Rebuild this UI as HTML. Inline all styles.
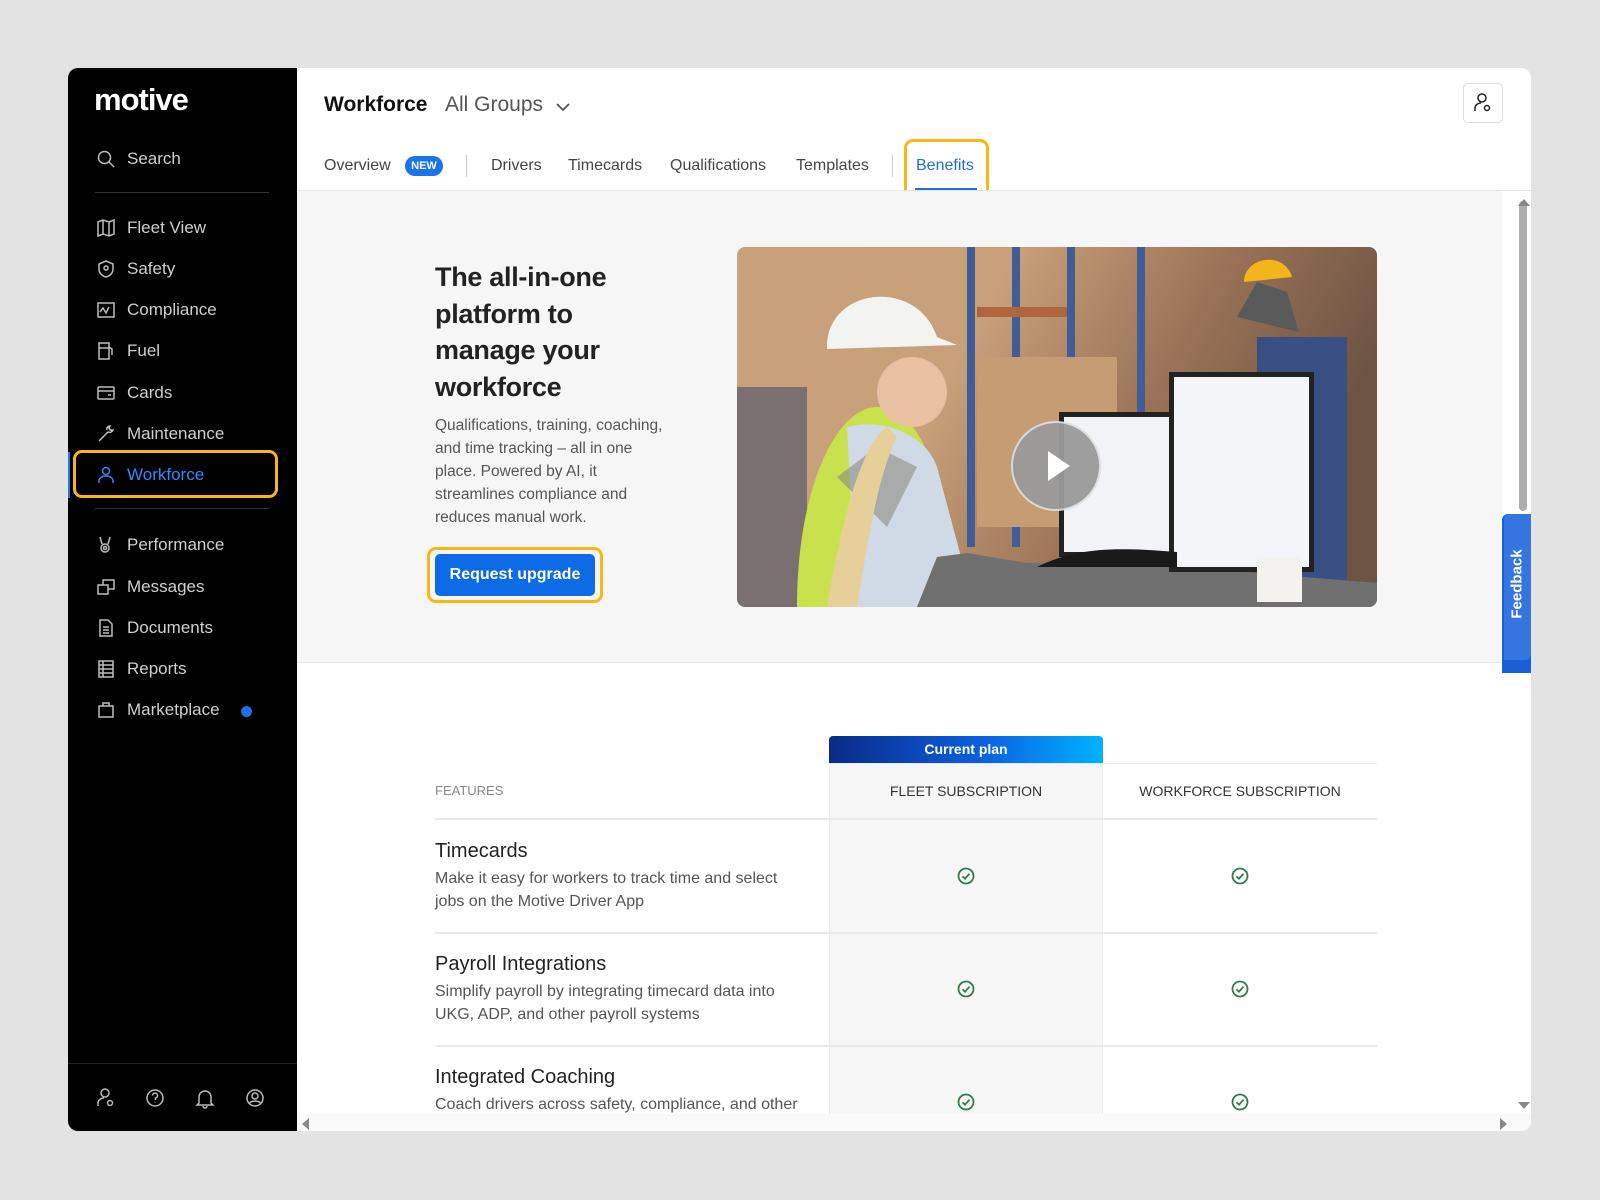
<!DOCTYPE html>
<html><head><meta charset="utf-8"><style>
*{box-sizing:border-box;margin:0;padding:0}
body{width:1600px;height:1200px;background:#e3e3e3;font-family:"Liberation Sans",sans-serif;position:relative;overflow:hidden}
.outer{position:absolute;left:0;top:0;width:1600px;height:1200px;border-radius:40px;background:#e3e3e3}
.app{position:absolute;left:68px;top:68px;width:1463px;height:1063px;background:#fff;border-radius:10px;overflow:hidden}
.side{position:absolute;left:0;top:0;width:229px;height:1063px;background:#000;color:#d0d0d0}
.si{position:absolute;left:28px;display:flex;align-items:center;font-size:17px;color:#cfcfcf}
.si svg{width:20px;height:20px;margin-right:11px;stroke:#bdbdbd;fill:none;stroke-width:1.5}
.sep{position:absolute;left:27px;width:174px;height:1px;background:#333}
.abs{position:absolute}
.tab{position:absolute;top:89px;font-size:16px;color:#444}
.chk{position:absolute;width:18px;height:18px}
</style></head><body>
<div class="outer"></div>
<div class="app">
 <div class="side">
  <div class="abs" style="left:26px;top:14px;color:#fff;font-size:31px;font-weight:bold;letter-spacing:-1px">motive</div>
  <div class="si" style="top:81px"><svg viewBox="0 0 20 20"><circle cx="8.5" cy="8.5" r="6"/><path d="M13 13l5 5"/></svg>Search</div>
  <div class="sep" style="top:124px"></div>
  <div class="si" style="top:150px"><svg viewBox="0 0 20 20"><path d="M2 4l5-2 6 2 5-2v14l-5 2-6-2-5 2z M7 2v14 M13 4v14"/></svg>Fleet View</div>
  <div class="si" style="top:191px"><svg viewBox="0 0 20 20"><path d="M10 2l7 3v5c0 4-3 7-7 8-4-1-7-4-7-8V5z"/><circle cx="10" cy="9" r="2"/></svg>Safety</div>
  <div class="si" style="top:232px"><svg viewBox="0 0 20 20"><rect x="2" y="3" width="16" height="14"/><path d="M4 12l3-4 3 5 3-6"/></svg>Compliance</div>
  <div class="si" style="top:273px"><svg viewBox="0 0 20 20"><rect x="3" y="2" width="10" height="16"/><path d="M3 7h10 M13 6l3 2v6"/></svg>Fuel</div>
  <div class="si" style="top:315px"><svg viewBox="0 0 20 20"><rect x="2" y="4" width="16" height="12" rx="1"/><path d="M2 8h16 M12 12h3"/></svg>Cards</div>
  <div class="si" style="top:356px"><svg viewBox="0 0 20 20"><path d="M3 17l6-6 M9 11l3-3c2 1 4 0 5-2l-3 0-1-2 1-2c-2 0-4 2-3 4"/></svg>Maintenance</div>
  <div class="abs" style="left:0;top:384px;width:2px;height:46px;background:#1f7aed"></div>
  <div class="abs" style="left:5px;top:382px;width:205px;height:48px;border:3px solid #fbb616;border-radius:9px"></div>
  <div class="si" style="top:397px;color:#2b8cff"><svg viewBox="0 0 20 20" style="stroke:#2b8cff"><circle cx="10" cy="6" r="3.5"/><path d="M3 18v-2c0-3 3-5 7-5s7 2 7 5v2"/></svg>Workforce</div>
  <div class="sep" style="top:440px"></div>
  <div class="si" style="top:467px"><svg viewBox="0 0 20 20"><circle cx="9" cy="13" r="4"/><circle cx="9" cy="13" r="1.5"/><path d="M6 9L4 2 M12 9l2-7"/></svg>Performance</div>
  <div class="si" style="top:509px"><svg viewBox="0 0 20 20"><rect x="2" y="8" width="10" height="9"/><path d="M7 8V3h11v9h-6"/></svg>Messages</div>
  <div class="si" style="top:550px"><svg viewBox="0 0 20 20"><path d="M4 2h8l4 4v12H4z M7 9h6 M7 12h6 M7 15h6"/></svg>Documents</div>
  <div class="si" style="top:591px"><svg viewBox="0 0 20 20"><rect x="3" y="2" width="14" height="16"/><path d="M3 6h14 M3 10h14 M3 14h14 M7 2v16"/></svg>Reports</div>
  <div class="si" style="top:632px"><svg viewBox="0 0 20 20"><path d="M3 6h14v11H3z M7 6V3h6v3"/></svg>Marketplace</div>
  <div class="abs" style="left:173px;top:638px;width:11px;height:11px;border-radius:50%;background:#1a73e8"></div>
  <div class="sep" style="top:995px;left:0;width:229px;background:#222"></div>
  <svg class="abs" style="left:27px;top:1019px" width="180" height="22" viewBox="0 0 180 22" fill="none" stroke="#bbb" stroke-width="1.5">
   <circle cx="10" cy="6" r="4"/><path d="M3 19v-3c0-3 3-5 6-5"/><circle cx="15" cy="16" r="2.5"/>
   <circle cx="60" cy="11" r="8"/><path d="M57.5 8.5a2.5 2.5 0 1 1 3 2.5v2 M60 15.5v.5"/>
   <path d="M104 16V10a6 6 0 0 1 12 0v6l2 2h-16z M108 19a2 2 0 0 0 4 0"/>
   <circle cx="160" cy="11" r="8"/><circle cx="160" cy="9" r="3"/><path d="M154.5 16c2-2.5 9-2.5 11 0"/>
  </svg>
 </div>

 <div class="abs" style="left:256px;top:25px;font-size:21px;font-weight:bold;color:#111">Workforce</div>
 <div class="abs" style="left:377px;top:25px;font-size:21px;color:#555">All Groups</div>
 <svg class="abs" style="left:487px;top:33px" width="16" height="12" viewBox="0 0 16 12"><path d="M2 3l6 6 6-6" stroke="#555" stroke-width="1.8" fill="none"/></svg>
 <div class="abs" style="left:1395px;top:15px;width:40px;height:40px;border:1px solid #ddd;border-radius:5px"></div>
 <svg class="abs" style="left:1404px;top:24px" width="22" height="22" viewBox="0 0 22 22" fill="none" stroke="#222" stroke-width="1.5"><circle cx="10" cy="6" r="4"/><path d="M3 19v-3c0-3 3-5 6-5"/><circle cx="15" cy="16" r="2.5"/></svg>

 <div class="tab" style="left:256px">Overview</div>
 <div class="abs" style="left:337px;top:88px;width:38px;height:20px;border-radius:10px;background:#1a73e8;color:#fff;font-size:11px;font-weight:bold;text-align:center;line-height:20px">NEW</div>
 <div class="abs" style="left:398px;top:87px;width:1px;height:22px;background:#ccc"></div>
 <div class="tab" style="left:423px">Drivers</div>
 <div class="tab" style="left:500px">Timecards</div>
 <div class="tab" style="left:602px">Qualifications</div>
 <div class="tab" style="left:728px">Templates</div>
 <div class="abs" style="left:824px;top:87px;width:1px;height:22px;background:#ccc"></div>
 <div class="tab" style="left:848px;color:#1a6fe0">Benefits</div>
 <div class="abs" style="left:847px;top:120px;width:62px;height:2px;background:#1a6fe0"></div>
 <div class="abs" style="left:836px;top:71px;width:85px;height:59px;border:3px solid #fbb616;border-radius:9px"></div>
 <div class="abs" style="left:229px;top:122px;width:1276px;height:1px;background:#e6e6e6"></div>

 <div class="abs" style="left:229px;top:123px;width:1205px;height:472px;background:#f6f6f6;border-bottom:1px solid #e4e4e4"></div>
 <div class="abs" style="left:367px;top:191px;width:215px;font-size:27px;line-height:36.5px;color:#222;font-weight:bold;letter-spacing:-0.3px">The all-in-one platform to manage your workforce</div>
 <div class="abs" style="left:367px;top:346px;width:240px;font-size:15.5px;line-height:23px;color:#555">Qualifications, training, coaching, and time tracking – all in one place. Powered by AI, it streamlines compliance and reduces manual work.</div>
 <div class="abs" style="left:359px;top:479px;width:176px;height:56px;border:3px solid #fbb616;border-radius:9px"></div>
 <div class="abs" style="left:367px;top:486px;width:160px;height:42px;background:#0d6be6;border-radius:5px;color:#fff;font-weight:bold;font-size:16px;text-align:center;line-height:42px">Request upgrade</div>

 <svg class="abs" style="left:669px;top:179px;border-radius:8px" width="640" height="360" viewBox="0 0 640 360">
  <defs><linearGradient id="bg" x1="0" y1="0" x2="1" y2="0.3"><stop offset="0" stop-color="#c9a27c"/><stop offset=".4" stop-color="#c8a07a"/><stop offset=".7" stop-color="#9c7458"/><stop offset="1" stop-color="#6e5443"/></linearGradient></defs>
  <rect width="640" height="360" fill="url(#bg)"/>
  <rect x="230" y="0" width="8" height="300" fill="#3f5d97"/><rect x="275" y="0" width="8" height="300" fill="#3f5d97"/><rect x="330" y="0" width="8" height="240" fill="#3f5d97"/><rect x="400" y="0" width="8" height="220" fill="#3f5d97"/>
  <rect x="240" y="60" width="90" height="10" fill="#b0653e"/><rect x="240" y="110" width="140" height="170" fill="#c59c74"/>
  <rect x="520" y="90" width="90" height="280" fill="#3a4f84"/><path d="M500 70l20-35 30 10 12 40z" fill="#5a5a5a"/><path d="M507 35c0-25 40-32 48-5z" fill="#f2b51b"/>
  <rect x="0" y="140" width="70" height="220" fill="#47506a" opacity=".6"/>
  <path d="M60 360c0-120 40-200 80-200s70 60 80 200z" fill="#c9e14c"/>
  <path d="M110 180c40-10 80 10 90 40l40 150h-120z" fill="#cfdae6"/>
  <path d="M100 230l40-30 40 20-30 60z" fill="#8c8c80" opacity=".6"/>
  <path d="M150 180c-30 20-50 120-60 180h30c10-60 20-130 40-170z" fill="#e6cf98"/>
  <circle cx="175" cy="145" r="35" fill="#e9c0a2"/>
  <path d="M90 100c0-60 90-70 110-10l20 8-130 4z" fill="#f3f3f1"/>
  <path d="M200 310l30-4 60 10 110 0 240 20v24H180z" fill="#707070"/>
  <rect x="322" y="165" width="115" height="145" fill="#222"/><rect x="327" y="170" width="105" height="135" fill="#f1f3f6"/>
  <rect x="432" y="125" width="145" height="200" fill="#222"/><rect x="437" y="130" width="135" height="190" fill="#f4f5f8"/>
  <rect x="520" y="310" width="45" height="45" fill="#f3f2ee"/>
  <path d="M300 320c40-20 80-20 140-15l0 15z" fill="#1a1a1a"/>
  <circle cx="319" cy="219" r="44" fill="#9a9a9a" stroke="#ddd" stroke-width="2" opacity=".95"/>
  <path d="M311 204l22 15-22 15z" fill="#fff"/>
 </svg>

 <div class="abs" style="left:1434px;top:446px;width:29px;height:159px;background:#1a5fd6;border-radius:6px 0 0 0"></div>
 <div class="abs" style="left:1436px;top:446px;width:27px;height:146px;background:#3575e0;border-radius:6px 0 6px 0"></div>
 <div class="abs" style="left:1449px;top:516px;transform:translate(-50%,-50%) rotate(-90deg);color:#fff;font-weight:bold;font-size:15px">Feedback</div>
 <div class="abs" style="left:1451px;top:133px;width:8px;height:310px;background:#8c8c8c;border-radius:4px;opacity:.7"></div>
 <svg class="abs" style="left:1450px;top:130px" width="12" height="8"><path d="M0 8l6-7 6 7z" fill="#888"/></svg>
 <svg class="abs" style="left:1450px;top:1034px" width="12" height="8"><path d="M0 0l6 7 6-7z" fill="#888"/></svg>

 <div class="abs" style="left:761px;top:668px;width:274px;height:27px;border-radius:4px 4px 0 0;background:linear-gradient(90deg,#0a2a84,#0a5fe0 55%,#00b2ff);color:#fff;font-weight:bold;font-size:14px;text-align:center;line-height:27px">Current plan</div>
 <div class="abs" style="left:761px;top:695px;width:274px;height:420px;background:#f6f6f6;border-left:1px solid #ebebeb;border-right:1px solid #ebebeb"></div>
 <div class="abs" style="left:761px;top:695px;width:548px;height:1px;background:#e8e8e8"></div>
 <div class="abs" style="left:367px;top:715px;font-size:13px;color:#888">FEATURES</div>
 <div class="abs" style="left:761px;top:715px;width:274px;text-align:center;font-size:14px;color:#333">FLEET SUBSCRIPTION</div>
 <div class="abs" style="left:1035px;top:715px;width:274px;text-align:center;font-size:14px;color:#333">WORKFORCE SUBSCRIPTION</div>
 <div class="abs" style="left:367px;top:750px;width:942px;height:2px;background:#eaeaea"></div>
 <div class="abs" style="left:367px;top:864px;width:942px;height:2px;background:#eaeaea"></div>
 <div class="abs" style="left:367px;top:977px;width:942px;height:2px;background:#eaeaea"></div>

 <div class="abs" style="left:367px;top:772px;font-size:20px;color:#222;font-weight:500">Timecards</div>
 <div class="abs" style="left:367px;top:799px;width:370px;font-size:16px;line-height:23px;color:#555">Make it easy for workers to track time and select jobs on the Motive Driver App</div>
 <div class="abs" style="left:367px;top:885px;font-size:20px;color:#222;font-weight:500">Payroll Integrations</div>
 <div class="abs" style="left:367px;top:912px;width:370px;font-size:16px;line-height:23px;color:#555">Simplify payroll by integrating timecard data into UKG, ADP, and other payroll systems</div>
 <div class="abs" style="left:367px;top:998px;font-size:20px;color:#222;font-weight:500">Integrated Coaching</div>
 <div class="abs" style="left:367px;top:1025px;width:400px;font-size:16px;line-height:23px;color:#555;white-space:nowrap">Coach drivers across safety, compliance, and other</div>

 <svg width="0" height="0" style="position:absolute"><defs><g id="ck"><circle cx="9" cy="9" r="7.5" fill="none" stroke="#2e7d4a" stroke-width="1.8"/><path d="M5.5 9.2l2.5 2.5 4.5-5" fill="none" stroke="#2e7d4a" stroke-width="1.8"/></g></defs></svg>
 <svg class="chk" style="left:889px;top:799px"><use href="#ck"/></svg>
 <svg class="chk" style="left:1163px;top:799px"><use href="#ck"/></svg>
 <svg class="chk" style="left:889px;top:912px"><use href="#ck"/></svg>
 <svg class="chk" style="left:1163px;top:912px"><use href="#ck"/></svg>
 <svg class="chk" style="left:889px;top:1025px"><use href="#ck"/></svg>
 <svg class="chk" style="left:1163px;top:1025px"><use href="#ck"/></svg>

 <div class="abs" style="left:229px;top:1046px;width:1234px;height:17px;background:#fafafa"></div>
 <svg class="abs" style="left:233px;top:1050px" width="8" height="12"><path d="M8 0L1 6l7 6z" fill="#888"/></svg>
 <svg class="abs" style="left:1432px;top:1050px" width="8" height="12"><path d="M0 0l7 6-7 6z" fill="#888"/></svg>
</div>
</body></html>
